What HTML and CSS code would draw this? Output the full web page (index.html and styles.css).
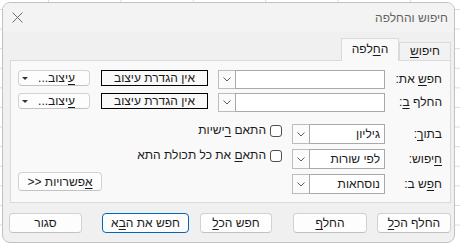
FILE: index.html
```html
<!DOCTYPE html>
<html lang="he">
<head>
    <meta charset="UTF-8">
    <meta name="viewport" content="width=device-width, initial-scale=1.0">
    <title>חיפוש והחלפה</title>
    <link rel="stylesheet" href="styles.css">
</head>
<body>

<div class="dialog" dir="rtl">
    <div class="titlebar">
        <span class="title">חיפוש והחלפה</span>
        <span class="close">
            <svg width="11" height="11" viewBox="0 0 11 11"><path d="M0.5 0.5 L10.5 10.5 M10.5 0.5 L0.5 10.5" stroke="#6e6e6e" stroke-width="1" fill="none"/></svg>
        </span>
    </div>

    <div class="content">
        <div class="tabs">
            <div class="tab">חיפו<u>ש</u></div>
            <div class="tab active">ה<u>ח</u>לפה</div>
        </div>

        <div class="panel">
            <div class="row">
                <span class="label">חפ<u>ש</u> את:</span>
                <div class="combo">
                    <div class="field wide"></div>
                    <div class="arrow"><svg width="8" height="5" viewBox="0 0 8 5"><path d="M0.5 0.5 L4 4 L7.5 0.5" stroke="#5f5f5f" fill="none"/></svg></div>
                </div>
                <div class="preview">אין הגדרת עיצוב</div>
                <button class="btn fmt"><span><u>ע</u>יצוב...</span><svg width="6" height="3" viewBox="0 0 6 3"><path d="M0 0 H6 L3 3 Z" fill="#333"/></svg></button>
            </div>
            <div class="row second">
                <span class="label">החלף <u>ב</u>:</span>
                <div class="combo">
                    <div class="field wide"></div>
                    <div class="arrow"><svg width="8" height="5" viewBox="0 0 8 5"><path d="M0.5 0.5 L4 4 L7.5 0.5" stroke="#5f5f5f" fill="none"/></svg></div>
                </div>
                <div class="preview">אין הגדרת עיצוב</div>
                <button class="btn fmt"><span><u>ע</u>יצוב...</span><svg width="6" height="3" viewBox="0 0 6 3"><path d="M0 0 H6 L3 3 Z" fill="#333"/></svg></button>
            </div>

            <div class="options">
                <div class="row opt">
                    <span class="label">בתו<u>ך</u>:</span>
                    <div class="combo">
                        <div class="field narrow">גיליון</div>
                        <div class="arrow"><svg width="8" height="5" viewBox="0 0 8 5"><path d="M0.5 0.5 L4 4 L7.5 0.5" stroke="#5f5f5f" fill="none"/></svg></div>
                    </div>
                    <label class="check"><span class="box"></span><span>התאם <u>ר</u>ישיות</span></label>
                </div>
                <div class="row opt">
                    <span class="label"><u>ח</u>יפוש:</span>
                    <div class="combo">
                        <div class="field narrow">לפי שורות</div>
                        <div class="arrow"><svg width="8" height="5" viewBox="0 0 8 5"><path d="M0.5 0.5 L4 4 L7.5 0.5" stroke="#5f5f5f" fill="none"/></svg></div>
                    </div>
                    <label class="check"><span class="box"></span><span>התא<u>ם</u> את כל תכולת התא</span></label>
                </div>
                <div class="row opt">
                    <span class="label">ח<u>פ</u>ש ב:</span>
                    <div class="combo">
                        <div class="field narrow">נוסחאות</div>
                        <div class="arrow"><svg width="8" height="5" viewBox="0 0 8 5"><path d="M0.5 0.5 L4 4 L7.5 0.5" stroke="#5f5f5f" fill="none"/></svg></div>
                    </div>
                    <button class="btn more"><u>א</u>פשרויות &lt;&lt;</button>
                </div>
            </div>
        </div>

        <div class="footer">
            <button class="btn w74">החלף הכ<u>ל</u></button>
            <button class="btn w74 gap10">החל<u>ף</u></button>
            <button class="btn w72 gap21">חפש הכ<u>ל</u></button>
            <button class="btn w87 gap11 default">חפש את ה<u>ב</u>א</button>
            <button class="btn w73 gap20">סגור</button>
        </div>
    </div>
</div>

</body>
</html>
```

FILE: styles.css
```css
* {
    box-sizing: border-box;
}

body {
    margin: 0;
    width: 460px;
    height: 243px;
    overflow: hidden;
    background-color: #ffffff;
    background-image:
        linear-gradient(to right, #dadada 1px, transparent 1px),
        linear-gradient(to bottom, #dadada 1px, transparent 1px);
    background-size: 72.4px 100%, 100% 19.6px;
    background-position: 48px 0, 0 9px;
    font-family: 'Liberation Sans', 'DejaVu Sans', sans-serif;
    font-size: 12px;
    color: #1a1a1a;
}

u {
    text-underline-offset: 2px;
}

.dialog {
    margin: 2px 0 0 2px;
    width: 453px;
    height: 241px;
    border: 1px solid #c2c2c2;
    border-radius: 8px;
    background: #f0f0f0;
    overflow: hidden;
    display: flex;
    flex-direction: column;
}

.titlebar {
    height: 29px;
    background: #f3f3f3;
    display: flex;
    align-items: center;
    justify-content: space-between;
    padding: 0 6px 0 9px;
}

.title {
    color: #636363;
}

.close {
    display: flex;
}

.content {
    padding: 6px 3px 0 7px;
}

.tabs {
    display: flex;
    align-items: flex-end;
    height: 22px;
}

.tab {
    height: 18px;
    padding: 0 9px;
    border: 1px solid #dadada;
    border-bottom: none;
    background: #f2f2f2;
    line-height: 17px;
    width: 52px;
    text-align: center;
}

.tab.active {
    width: 58px;
    height: 23px;
    margin-bottom: -1px;
    background: #f9f9f9;
    line-height: 20px;
    position: relative;
}

.panel {
    height: 143px;
    border: 1px solid #dadada;
    background: #f9f9f9;
    padding: 9px 8px 0 7px;
}

.row {
    display: flex;
    align-items: flex-start;
    height: 19px;
}

.row.second {
    margin-top: 4px;
}

.label {
    width: 57px;
    flex-shrink: 0;
    line-height: 19px;
}

.combo {
    display: flex;
    height: 19px;
}

.field {
    border: 1px solid #a9a9a9;
    background: #ffffff;
    line-height: 17px;
    padding: 0 4px;
}

.field.wide {
    width: 150px;
}

.field.narrow {
    width: 76px;
}

.arrow {
    width: 17px;
    border: 1px solid #bcbcbc;
    border-right: none;
    background: #fbfbfb;
    display: flex;
    align-items: center;
    justify-content: center;
}

.preview {
    width: 107px;
    height: 16px;
    margin-right: 10px;
    border: 1px solid #000000;
    text-align: center;
    line-height: 14px;
}

.btn {
    font-family: inherit;
    font-size: 12px;
    color: #1a1a1a;
    background: #fdfdfd;
    border: 1px solid #d2d2d2;
    border-bottom-color: #c2c2c2;
    border-radius: 4px;
    padding: 0;
    height: 20px;
}

.fmt {
    width: 72px;
    height: 16px;
    margin-right: 11px;
    display: flex;
    align-items: center;
    justify-content: space-between;
    padding: 0 14px 0 3px;
    line-height: 14px;
}

.options {
    margin-top: 12px;
}

.row.opt {
    height: 20px;
    margin-bottom: 5px;
}

.row.opt .combo {
    height: 20px;
}

.row.opt .field {
    line-height: 18px;
}

.row.opt .label {
    line-height: 20px;
}

.check {
    display: flex;
    align-items: center;
    margin-right: 10px;
    height: 13px;
    line-height: 13px;
}

.box {
    width: 12px;
    height: 12px;
    border: 1px solid #505050;
    border-radius: 3px;
    background: #ffffff;
    margin-left: 4px;
}

.more {
    width: 84px;
    height: 19px;
    margin-right: auto;
    margin-top: -2px;
}

.footer {
    display: flex;
    margin-top: 10px;
    margin-left: -1px;
}

.w74 { width: 74px; }
.w72 { width: 72px; }
.w87 { width: 87px; }
.w73 { width: 73px; }

.gap10 { margin-right: 10px; }
.gap21 { margin-right: 21px; }
.gap11 { margin-right: 11px; }
.gap20 { margin-right: 20px; }

.btn.default {
    border-color: #0067c0;
}
```
